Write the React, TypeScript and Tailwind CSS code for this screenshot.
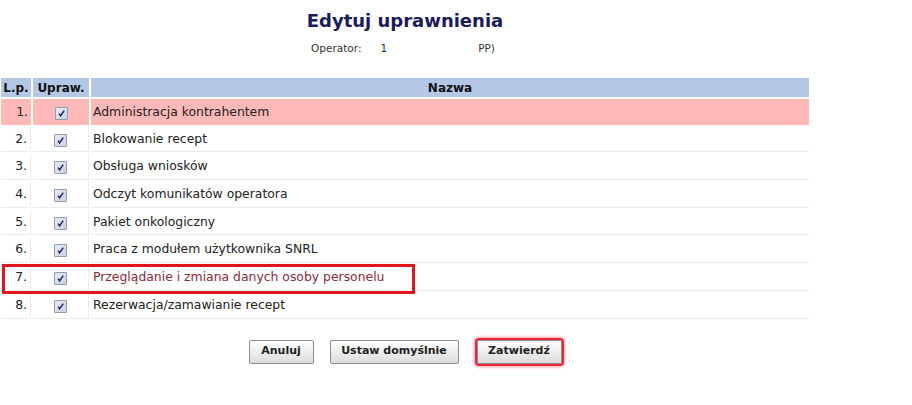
import React from "react";

const rows = [
  "Administracja kontrahentem",
  "Blokowanie recept",
  "Obsługa wniosków",
  "Odczyt komunikatów operatora",
  "Pakiet onkologiczny",
  "Praca z modułem użytkownika SNRL",
  "Przeglądanie i zmiana danych osoby personelu",
  "Rezerwacja/zamawianie recept",
];

function Check() {
  return (
    <span className="inline-flex h-[13px] w-[13px] items-center justify-center rounded-[1px] border border-[#8f9cb3] bg-gradient-to-br from-[#e9edf4] to-[#c9d1de]">
      <svg width="9" height="9" viewBox="0 0 9 9">
        <path d="M2 4.6 L3.6 6.8 L7.2 1.6" fill="none" stroke="#24307a" strokeWidth="1.6" />
      </svg>
    </span>
  );
}

export default function App() {
  return (
    <div className="min-h-[405px] w-[912px] bg-white font-['DejaVu_Sans',sans-serif] text-[#222]">
      <div className="relative flex w-[810px] flex-col items-center pt-[9px]">
        <h1 className="text-[18px] font-bold leading-[24px] text-[#1b1b5c]">Edytuj uprawnienia</h1>
        <p className="mt-[8px] flex -translate-x-[2px] text-[10.5px] leading-[14px] text-[#333]">
          <span>Operator:</span>
          <span className="ml-[19px]">1</span>
          <span className="ml-[91px]">PP)</span>
        </p>

        <table className="mt-[21px] w-[812px] border-separate border-spacing-[2px] text-[12.4px]">
          <thead>
            <tr className="h-[19px] bg-[#b4c7e5] text-[12px] font-bold text-[#111]">
              <th className="w-[30px] px-[2px] text-center">L.p.</th>
              <th className="w-[56px] text-center">Upraw.</th>
              <th className="text-center">Nazwa</th>
            </tr>
          </thead>
          <tbody>
            {rows.map((name, i) => {
              const first = i === 0;
              const marked = i === 6;
              return (
                <tr key={name} className={first ? "h-[25.7px] bg-[#ffb9b9]" : "h-[25.7px] bg-white"}>
                  <td className={`pr-[3px] text-right ${first ? "" : "border-b border-r border-[#ececec]"}`}>{i + 1}.</td>
                  <td className={`text-center ${first ? "" : "border-b border-r border-[#ececec]"}`}>
                    <span className="inline-flex translate-y-[2px]"><Check /></span>
                  </td>
                  <td className={`pl-[2px] ${first ? "" : "border-b border-[#ececec]"} ${marked ? "text-[#8b2c3c]" : ""}`}>{name}</td>
                </tr>
              );
            })}
          </tbody>
        </table>

        <div className="pointer-events-none absolute left-[2px] top-[264px] h-[30px] w-[413px] border-[3.5px] border-[#e3141e]" />

        <div className="mt-[19px] flex items-center text-[11px] font-bold text-[#222]">
          <button type="button" className="h-[24px] w-[65px] rounded-[2px] border border-[#8e8e8e] bg-gradient-to-b from-white to-[#dcdcdc]">Anuluj</button>
          <button type="button" className="ml-[16px] h-[24px] w-[129px] rounded-[2px] border border-[#8e8e8e] bg-gradient-to-b from-white to-[#dcdcdc]">Ustaw domyślnie</button>
          <button type="button" className="ml-[18px] h-[24px] w-[85px] rounded-[2px] border border-[#8e8e8e] bg-gradient-to-b from-white to-[#dcdcdc] shadow-[0_0_0_2px_#e6283a,0_0_3px_3px_rgba(230,40,60,0.45)]">Zatwierdź</button>
        </div>
      </div>
    </div>
  );
}
